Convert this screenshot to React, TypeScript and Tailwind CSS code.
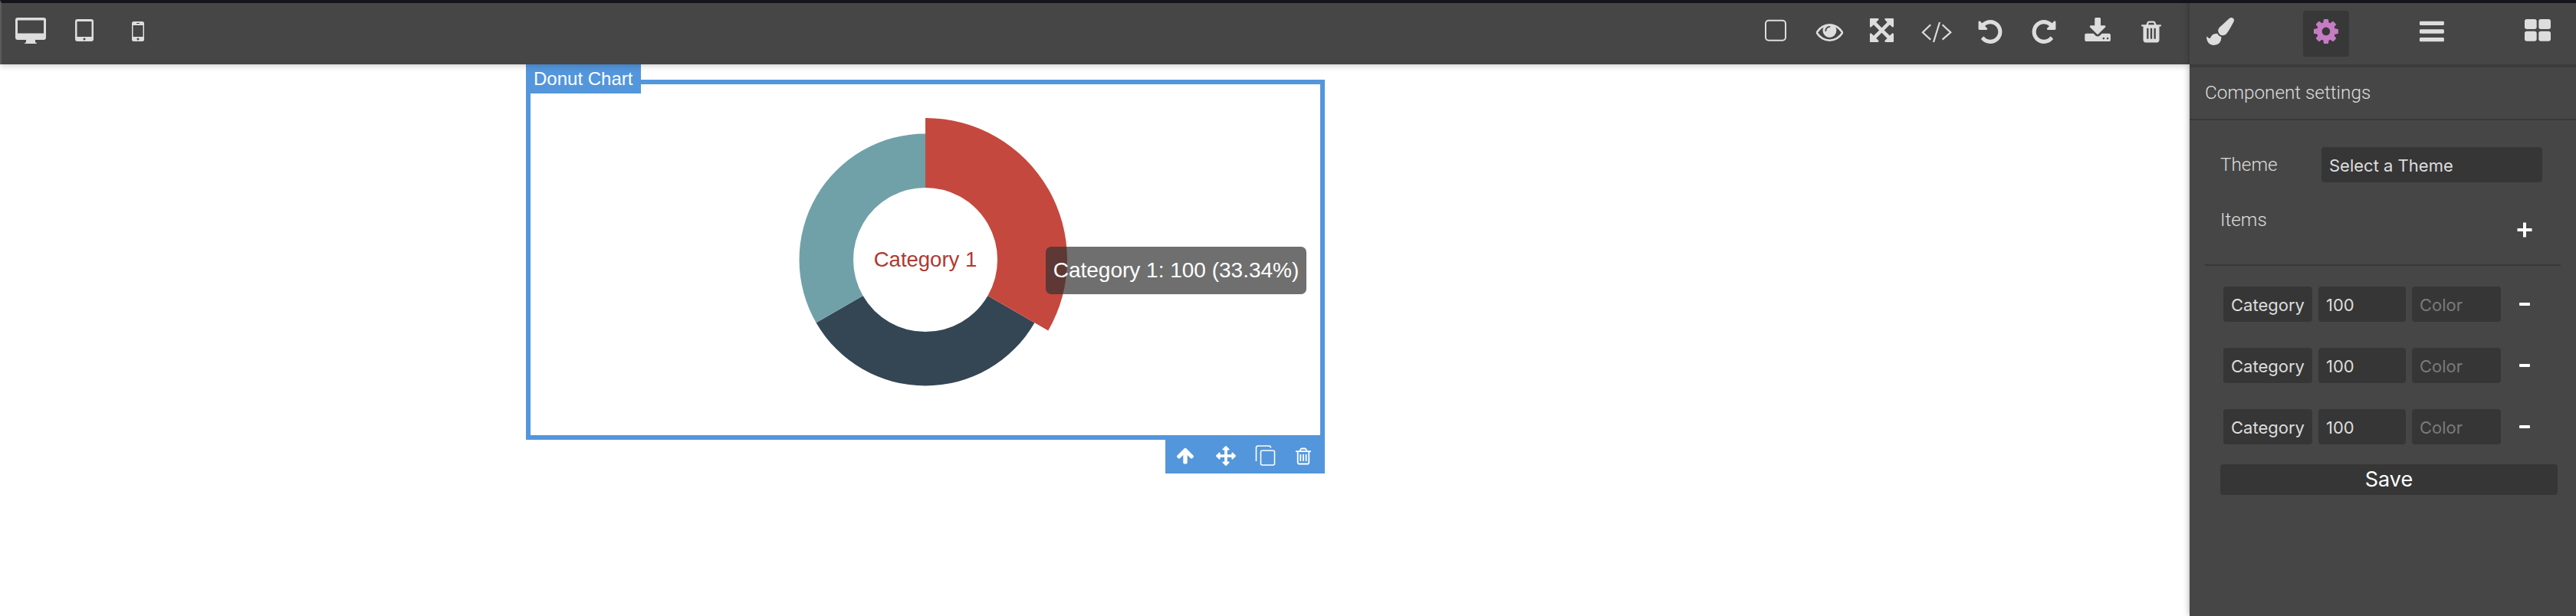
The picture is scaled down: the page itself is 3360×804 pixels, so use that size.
import React from "react";

const P = {
  trash: "M704 1376v-704q0-14-9-23t-23-9h-64q-14 0-23 9t-9 23v704q0 14 9 23t23 9h64q14 0 23-9t9-23zm256 0v-704q0-14-9-23t-23-9h-64q-14 0-23 9t-9 23v704q0 14 9 23t23 9h64q14 0 23-9t9-23zm256 0v-704q0-14-9-23t-23-9h-64q-14 0-23 9t-9 23v704q0 14 9 23t23 9h64q14 0 23-9t9-23zm-544-992h448l-48-117q-7-9-17-11h-317q-10 2-17 11zm928 32v64q0 14-9 23t-23 9h-96v948q0 83-47 143.5t-113 60.5h-832q-66 0-113-58.5t-47-141.5v-952h-96q-14 0-23-9t-9-23v-64q0-14 9-23t23-9h309l70-167q15-37 54-63t79-26h320q40 0 79 26t54 63l70 167h309q14 0 23 9t9 23z",
  trashO: "M704 736v576q0 14-9 23t-23 9h-64q-14 0-23-9t-9-23v-576q0-14 9-23t23-9h64q14 0 23 9t9 23zm256 0v576q0 14-9 23t-23 9h-64q-14 0-23-9t-9-23v-576q0-14 9-23t23-9h64q14 0 23 9t9 23zm256 0v576q0 14-9 23t-23 9h-64q-14 0-23-9t-9-23v-576q0-14 9-23t23-9h64q14 0 23 9t9 23zm128 724v-948h-896v948q0 22 7 40.5t14.5 27 10.5 8.5h832q3 0 10.5-8.5t14.5-27 7-40.5zm-672-1076h448l-48-117q-7-9-17-11h-317q-10 2-17 11zm928 32v64q0 14-9 23t-23 9h-96v948q0 83-47 143.5t-113 60.5h-832q-66 0-113-58.5t-47-141.5v-952h-96q-14 0-23-9t-9-23v-64q0-14 9-23t23-9h309l70-167q15-37 54-63t79-26h320q40 0 79 26t54 63l70 167h309q14 0 23 9t9 23z",
  undo: "M1664 896q0 156-61 298t-164 245-245 164-298 61q-172 0-327-72.5t-264-204.5q-7-10-6.5-22.5t8.5-20.5l137-138q10-9 25-9 16 2 23 12 73 95 179 147t225 52q104 0 198.5-40.5t163.5-109.5 109.5-163.5 40.5-198.5-40.5-198.5-109.5-163.5-163.5-109.5-198.5-40.5q-98 0-188 35.5t-160 101.5l137 138q31 30 14 69-17 40-59 40h-448q-26 0-45-19t-19-45v-448q0-42 40-59 39-17 69 14l130 129q107-101 244.5-156.5t284.5-55.5q156 0 298 61t245 164 164 245 61 298z",
  redo: "M1664 256v448q0 26-19 45t-45 19h-448q-42 0-59-40-17-39 14-69l138-138q-148-137-349-137-104 0-198.5 40.5t-163.5 109.5-109.5 163.5-40.5 198.5 40.5 198.5 109.5 163.5 163.5 109.5 198.5 40.5q119 0 225-52t179-147q7-10 23-12 14 0 25 9l137 138q9 8 9.5 20.5t-7.5 22.5q-109 132-264 204.5t-327 72.5q-156 0-298-61t-245-164-164-245-61-298 61-298 164-245 245-164 298-61q147 0 284.5 55.5t244.5 156.5l130-129q29-31 70-14 39 17 39 59z",
  cog: "M1152 896q0-106-75-181t-181-75-181 75-75 181 75 181 181 75 181-75 75-181zm512-109v222q0 12-8 23t-20 13l-185 28q-19 54-39 91 35 50 107 138 10 12 10 25t-9 23q-27 37-99 108t-94 71q-12 0-26-9l-138-108q-44 23-91 38-16 136-29 186-7 28-36 28h-222q-14 0-24.5-8.5t-11.5-21.5l-28-184q-49-16-90-37l-141 107q-10 9-25 9-14 0-25-11-126-114-165-168-7-10-7-23 0-12 8-23 15-21 51-66.5t54-70.5q-27-50-41-99l-183-27q-13-2-21-12.5t-8-23.5v-222q0-12 8-23t19-13l186-28q14-46 39-92-40-57-107-138-10-12-10-24 0-10 9-23 26-36 98.5-107.5t94.5-71.5q13 0 26 10l138 107q44-23 91-38 16-136 29-186 7-28 36-28h222q14 0 24.5 8.5t11.5 21.5l28 184q49 16 90 37l142-107q9-9 24-9 13 0 25 10 129 119 165 170 7 8 7 22 0 12-8 23-15 21-51 66.5t-54 70.5q26 50 41 98l183 28q13 2 21 12.5t8 23.5z",
  bars: "M1664 1344v128q0 26-19 45t-45 19h-1408q-26 0-45-19t-19-45v-128q0-26 19-45t45-19h1408q26 0 45 19t19 45zm0-512v128q0 26-19 45t-45 19h-1408q-26 0-45-19t-19-45v-128q0-26 19-45t45-19h1408q26 0 45 19t19 45zm0-512v128q0 26-19 45t-45 19h-1408q-26 0-45-19t-19-45v-128q0-26 19-45t45-19h1408q26 0 45 19t19 45z",
  th: "M832 1024v384q0 52-38 90t-90 38h-512q-52 0-90-38t-38-90v-384q0-52 38-90t90-38h512q52 0 90 38t38 90zm0-768v384q0 52-38 90t-90 38h-512q-52 0-90-38t-38-90v-384q0-52 38-90t90-38h512q52 0 90 38t38 90zm896 768v384q0 52-38 90t-90 38h-512q-52 0-90-38t-38-90v-384q0-52 38-90t90-38h512q52 0 90 38t38 90zm0-768v384q0 52-38 90t-90 38h-512q-52 0-90-38t-38-90v-384q0-52 38-90t90-38h512q52 0 90 38t38 90z",
  up: "M1675 971q0 51-37 90l-75 75q-38 38-91 38-54 0-90-38l-294-293v704q0 52-37.5 84.5t-90.5 32.5h-128q-53 0-90.5-32.5t-37.5-84.5v-704l-294 293q-36 38-90 38t-90-38l-75-75q-38-38-38-90 0-53 38-91l651-651q35-37 90-37 54 0 91 37l651 651q37 39 37 91z",
  move: "M1792 896q0 26-19 45l-256 256q-19 19-45 19t-45-19-19-45v-128h-384v384h128q26 0 45 19t19 45-19 45l-256 256q-19 19-45 19t-45-19l-256-256q-19-19-19-45t19-45 45-19h128v-384h-384v128q0 26-19 45t-45 19-45-19l-256-256q-19-19-19-45t19-45l256-256q19-19 45-19t45 19 19 45v128h384v-384h-128q-26 0-45-19t-19-45 19-45l256-256q19-19 45-19t45 19l256 256q19 19 19 45t-19 45-45 19h-128v384h384v-128q0-26 19-45t45-19 45 19l256 256q19 19 19 45z",
  expand: "M1283 413l-355 355 355 355 144-144q29-31 70-14 39 17 39 59v448q0 26-19 45t-45 19h-448q-42 0-59-40-17-39 14-69l144-144-355-355-355 355 144 144q31 30 14 69-17 40-59 40h-448q-26 0-45-19t-19-45v-448q0-42 40-59 39-17 69 14l144 144 355-355-355-355-144 144q-19 19-45 19-12 0-24-5-40-17-40-59v-448q0-26 19-45t45-19h448q42 0 59 40 17 39-14 69l-144 144 355 355 355-355-144-144q-31-30-14-69 17-40 59-40h448q26 0 45 19t19 45v448q0 42-39 59-13 5-25 5-26 0-45-19z",
  brush: "M1615 0q70 0 122.5 46.5t52.5 116.5q0 63-45 151-332 629-465 752-97 91-218 91-126 0-216.5-92.5t-90.5-219.5q0-128 92-212l638-579q59-54 130-54zm-909 1034q39 76 106.5 130t150.5 76l1 71q4 213-129.5 347t-348.5 134q-123 0-218-46.5t-152.5-127.5-86.5-183-29-220q7 5 41 30t62 44.5 59 36.5 46 17q41 0 55-37 25-66 57.5-112.5t69.5-76 88-47.5 103-25.5 125-10.5z",
  eye: "M1664 960q-152-236-381-353 61 104 61 225 0 185-131.5 316.5t-316.5 131.5-316.5-131.5-131.5-316.5q0-121 61-225-229 117-381 353 133 205 333.5 326.5t434.5 121.5 434.5-121.5 333.5-326.5zm-720-384q0-20-14-34t-34-14q-125 0-214.5 89.5t-89.5 214.5q0 20 14 34t34 14 34-14 14-34q0-86 61-147t147-61q20 0 34-14t14-34zm848 384q0 34-20 69-140 230-376.5 368.5t-499.5 138.5-499.5-139-376.5-368q-20-35-20-69t20-69q140-229 376.5-368t499.5-139 499.5 139 376.5 368q20 35 20 69z",
  download: "M1344 1344q0-26-19-45t-45-19-45 19-19 45 19 45 45 19 45-19 19-45zm256 0q0-26-19-45t-45-19-45 19-19 45 19 45 45 19 45-19 19-45zm128-224v320q0 40-28 68t-68 28h-1472q-40 0-68-28t-28-68v-320q0-40 28-68t68-28h465l135 136q58 56 136 56t136-56l136-136h464q40 0 68 28t28 68zm-325-569q17 41-14 70l-448 448q-18 19-45 19t-45-19l-448-448q-31-29-14-70 17-39 59-39h256v-448q0-26 19-45t45-19h256q26 0 45 19t19 45v448h256q42 0 59 39z",
};

const ICON = "#dddddd";
const BAR = "#464646";

function G({ d, x, y, size, fill = ICON }: { d: string; x: number; y: number; size: number; fill?: string }) {
  return (
    <svg x={x} y={y} width={size} height={size} viewBox="0 0 1792 1792">
      <path d={d} fill={fill} />
    </svg>
  );
}

function Box({ children }: { children: React.ReactNode }) {
  return (
    <svg className="w-[44px] h-[44px] flex-none" viewBox="0 0 44 44">
      {children}
    </svg>
  );
}

function Tool({ active, children }: { active?: boolean; children: React.ReactNode }) {
  return (
    <div className={active ? "w-[60px] h-[60px] flex-none rounded-[4px] bg-[#383838]" : "w-[60px] h-[60px] flex-none"}>
      <svg className="w-[60px] h-[60px]" viewBox="0 0 60 60">
        {children}
      </svg>
    </div>
  );
}

function Field({ w, children, muted }: { w: string; children: React.ReactNode; muted?: boolean }) {
  return (
    <div className={`${w} h-[46px] flex-none flex items-center px-[10px] pt-[2px] rounded-[4px] bg-[#363636] text-[22px] font-['Inter',sans-serif] ${muted ? "text-[#7a7a7a]" : "text-[#dddddd]"}`}>
      {children}
    </div>
  );
}

function Row() {
  return (
    <div className="flex items-center pl-[44px] mb-[34px] h-[46px]">
      <Field w="w-[116px]">Category</Field>
      <div className="ml-[8px]"><Field w="w-[114px]">100</Field></div>
      <div className="ml-[8px]"><Field w="w-[116px]" muted>Color</Field></div>
      <div className="ml-[24px] w-[14px] h-[4px] bg-white rounded-[1px]" />
    </div>
  );
}

function arc(r0: number, r1: number, a0: number, a1: number) {
  const pt = (r: number, a: number) => {
    const t = (a * Math.PI) / 180;
    return `${(r * Math.sin(t)).toFixed(2)} ${(-r * Math.cos(t)).toFixed(2)}`;
  };
  return `M${pt(r1, a0)}A${r1} ${r1} 0 0 1 ${pt(r1, a1)}L${pt(r0, a1)}A${r0} ${r0} 0 0 0 ${pt(r0, a0)}Z`;
}

const LABEL = "text-[24.3px] text-[#dddddd] font-light font-['Roboto',sans-serif]";

export default function App() {
  return (
    <div className="flex w-[3360px] h-[804px] overflow-hidden bg-white font-['Liberation_Sans',sans-serif]">
      <div className="relative flex-1 min-w-0 flex flex-col">
        <header className="relative z-10 h-[84px] flex-none bg-[#464646] border-t-[4px] border-t-[#14141c] border-l-[2px] border-l-[#5c5c5c] shadow-[0_2px_8px_rgba(0,0,0,0.18)] flex items-center justify-between">
          <div className="flex items-center pl-[16px] gap-[26px] mt-[-4px]">
            <Box>
              <path fillRule="evenodd" fill={ICON} d="M5 3h34a3 3 0 0 1 3 3v23a3 3 0 0 1-3 3H28v3l2 1.500v.500H14v-.500l2-1.500v-3H5a3 3 0 0 1-3-3V6a3 3 0 0 1 3-3zM5 6.500v17h34v-17z" />
            </Box>
            <Box>
              <path fillRule="evenodd" fill={ICON} d="M13 5h18a3 3 0 0 1 3 3v23a3 3 0 0 1-3 3H13a3 3 0 0 1-3-3V8a3 3 0 0 1 3-3zM12.500 8v20h19V8z" />
              <circle cx="22" cy="31" r="1.500" fill={BAR} />
            </Box>
            <Box>
              <path fillRule="evenodd" fill={ICON} d="M16.500 8h11a2.500 2.500 0 0 1 2.500 2.500v21a2.500 2.500 0 0 1-2.500 2.500h-11a2.500 2.500 0 0 1-2.500-2.500v-21a2.500 2.500 0 0 1 2.500-2.500zM15.500 13v15h13V13z" />
              <rect x="20" y="10" width="4" height="1" fill={BAR} />
              <circle cx="22" cy="31" r="1.500" fill={BAR} />
            </Box>
          </div>
          <div className="flex items-center pr-[28px] gap-[26px] mt-[-4px]">
            <Box><rect x="9" y="6.700" width="26" height="26" rx="4" fill="none" stroke={ICON} strokeWidth="2" /></Box>
            <Box><G d={P.eye} x={4.600} y={3.400} size={35.700} /></Box>
            <Box><G d={P.expand} x={4.750} y={3.750} size={36.500} /></Box>
            <Box>
              <path d="M14.200 12.300L3.900 22.300 14.200 31.700M29.600 12.300L40.300 22.300 29.600 31.700" fill="none" stroke={ICON} strokeWidth="2.200" />
              <path d="M26 9L18 35" fill="none" stroke={ICON} strokeWidth="2.200" />
            </Box>
            <Box><G d={P.undo} x={4} y={3.500} size={36} /></Box>
            <Box><G d={P.redo} x={4} y={3.500} size={36} /></Box>
            <Box><G d={P.download} x={4} y={3} size={36.200} /></Box>
            <Box><G d={P.trash} x={5.650} y={5.150} size={32.700} /></Box>
          </div>
        </header>

        <main className="relative flex-1 min-h-0 pl-[686px] pt-[20px]">
          <div className="relative w-[1042px] h-[470px] border-[6px] border-[#5396dc] flex items-center justify-center">
            <svg className="w-[380px] h-[380px] flex-none" viewBox="-190 -190 380 380">
              <path d={arc(94, 164.500, 120, 240)} fill="#344654" />
              <path d={arc(94, 164.500, 240, 360)} fill="#70a1a8" />
              <path d={arc(94, 185, 0, 120)} fill="#c5483e" />
              <text x="0" y="9" textAnchor="middle" fontSize="27.500" fill="#b0392f" fontFamily="Liberation Sans, sans-serif">Category 1</text>
            </svg>
            <div className="absolute left-[672px] top-[212px] h-[62px] w-[340px] rounded-[7px] bg-[rgba(50,50,50,0.7)] flex items-center justify-center text-[28px] text-white whitespace-nowrap">Category 1: 100 (33.34%)</div>
            <div className="absolute left-[-6px] top-[-26px] w-[150px] h-[38px] bg-[#5396dc] flex items-center pl-[10px] text-[24px] text-white whitespace-nowrap">Donut Chart</div>
            <div className="absolute right-[-6px] bottom-[-50px] w-[208px] h-[44px] bg-[#5396dc] flex items-center">
              <svg className="w-[52px] h-[44px] flex-none" viewBox="0 0 52 44">
                <G d={P.up} x={13.350} y={8} size={25.300} fill="#ffffff" />
              </svg>
              <svg className="w-[52px] h-[44px] flex-none" viewBox="0 0 52 44">
                <G d={P.move} x={14} y={8} size={26} fill="#ffffff" />
              </svg>
              <svg className="w-[52px] h-[44px] flex-none" viewBox="0 0 52 44">
                <path d="M14.500 28V10.500a2.500 2.500 0 0 1 2.500-2.500h14a2.500 2.500 0 0 1 2.500 2.500" fill="none" stroke="#ffffff" strokeWidth="1.600" />
                <rect x="20.500" y="14" width="18" height="19" rx="2" fill="none" stroke="#ffffff" strokeWidth="1.600" />
              </svg>
              <svg className="w-[52px] h-[44px] flex-none" viewBox="0 0 52 44">
                <G d={P.trashO} x={11.250} y={8.750} size={25.500} fill="#ffffff" />
              </svg>
            </div>
          </div>
        </main>
      </div>

      <aside className="relative z-20 w-[504px] flex-none h-full bg-[#464646] border-t-[4px] border-t-[#14141c] shadow-[0_0_8px_rgba(0,0,0,0.35)] flex flex-col">
        <div className="h-[84px] flex-none flex items-start pl-[10px] pt-[10px] gap-[78px] border-b-[4px] border-b-[#3c3c3c]">
          <Tool><G d={P.brush} x={12} y={9} size={36} /></Tool>
          <Tool active><G d={P.cog} x={11.300} y={8.300} size={37.300} fill="#c67bc4" /></Tool>
          <Tool><G d={P.bars} x={11.300} y={8.350} size={37.300} /></Tool>
          <Tool><G d={P.th} x={11.700} y={8.400} size={36.600} /></Tool>
        </div>

        <div className={`h-[69px] flex-none flex items-center pl-[20px] border-b-[2px] border-b-[#383838] ${LABEL}`}>Component settings</div>

        <div className="flex items-center pt-[35px] pl-[40px] pr-[44px]">
          <div className={`w-[132px] flex-none ${LABEL}`}>Theme</div>
          <div className="flex-1 h-[46px] flex items-center pl-[10px] pt-[2px] rounded-[4px] bg-[#363636] text-[22px] text-[#dddddd] font-['Inter',sans-serif]">Select a Theme</div>
        </div>

        <div className="relative h-[109px] flex-none mx-[20px] border-b-[2px] border-b-[#383838]">
          <div className={`pl-[20px] pt-[31px] ${LABEL}`}>Items</div>
          <svg className="absolute right-[33px] top-[48px] w-[28px] h-[28px]" viewBox="0 0 28 28">
            <path d="M4.500 14h19M14 4.500v19" stroke="#ffffff" strokeWidth="4" />
          </svg>
        </div>

        <div className="pt-[27px]">
          <Row />
          <Row />
          <Row />
        </div>

        <div className="mx-[40px] mt-[-8px] w-[440px] h-[40px] flex items-center justify-center rounded-[4px] bg-[#363636] text-[27px] text-white font-['Inter',sans-serif]">Save</div>
      </aside>
    </div>
  );
}
